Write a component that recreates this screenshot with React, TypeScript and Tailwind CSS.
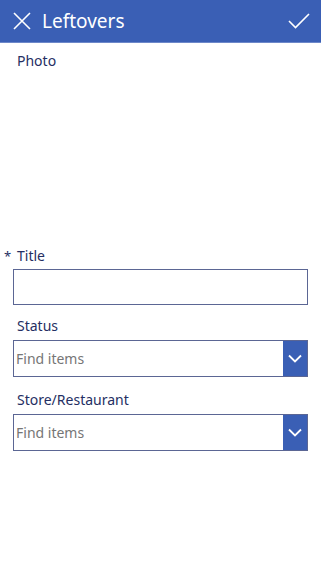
export default function App() {
  return (
    <div className="w-[321px] h-[573px] bg-white font-['Noto_Sans','Open_Sans',sans-serif] text-[#252f63]">
      <div className="h-[43px] bg-[#3a5fb5] border-b border-[#6d88c9] flex items-center px-[13px] text-white">
        <svg width="18" height="18" viewBox="0 0 18 18" className="shrink-0">
          <path d="M1 1 L17 17 M17 1 L1 17" stroke="white" strokeWidth="1.6" fill="none" />
        </svg>
        <span className="ml-[11px] text-[19px] leading-none">Leftovers</span>
        <svg width="22" height="16" viewBox="0 0 22 16" className="ml-auto mr-[-2px]">
          <path d="M1 8 L7.5 14.5 L21 1" stroke="white" strokeWidth="1.6" fill="none" />
        </svg>
      </div>

      <div className="pl-[17px] pt-[8px] text-[14px] leading-[20px]">Photo</div>
      <div className="h-[175px]" />

      <div className="flex items-center text-[14px] leading-[20px]">
        <span className="w-[17px] pl-[4px] text-[13px]">*</span>
        <span>Title</span>
      </div>
      <div className="mx-[13px] mt-[3px] h-[36px] border border-[#5b6694]" />

      <div className="pl-[17px] mt-[11px] text-[14px] leading-[20px]">Status</div>
      <Dropdown />

      <div className="pl-[17px] mt-[13px] text-[14px] leading-[20px]">Store/Restaurant</div>
      <Dropdown />
    </div>
  );
}

function Dropdown() {
  return (
    <div className="mx-[13px] mt-[4px] h-[37px] border border-[#5b6694] flex">
      <div className="flex-1 flex items-center pl-[2px] text-[14px] text-[#767676]">Find items</div>
      <div className="w-[24px] bg-[#3a5fb5] flex items-center justify-center">
        <svg width="14" height="9" viewBox="0 0 14 9">
          <path d="M1 1.5 L7 7.5 L13 1.5" stroke="white" strokeWidth="1.8" fill="none" />
        </svg>
      </div>
    </div>
  );
}
